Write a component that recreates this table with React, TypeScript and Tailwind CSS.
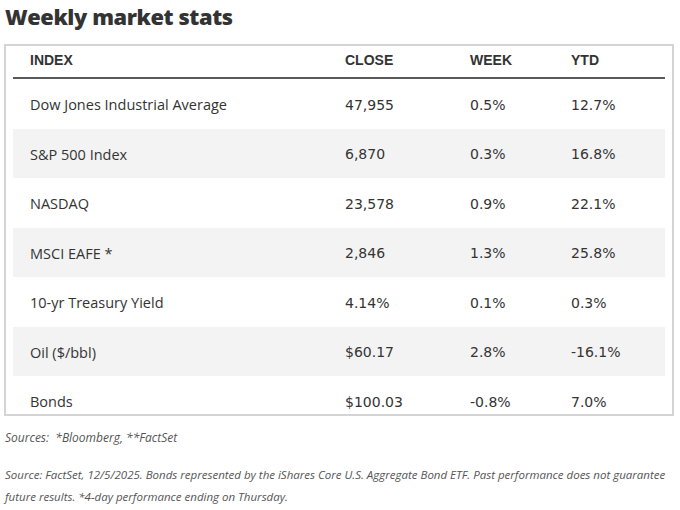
const rows = [
  { name: "Dow Jones Industrial Average", close: "47,955", week: "0.5%", ytd: "12.7%" },
  { name: "S&P 500 Index", close: "6,870", week: "0.3%", ytd: "16.8%" },
  { name: "NASDAQ", close: "23,578", week: "0.9%", ytd: "22.1%" },
  { name: "MSCI EAFE *", close: "2,846", week: "1.3%", ytd: "25.8%" },
  { name: "10-yr Treasury Yield", close: "4.14%", week: "0.1%", ytd: "0.3%" },
  { name: "Oil ($/bbl)", close: "$60.17", week: "2.8%", ytd: "-16.1%" },
  { name: "Bonds", close: "$100.03", week: "-0.8%", ytd: "7.0%" },
];

const cols = "grid grid-cols-[315px_125px_101px_1fr] items-center pl-[17px]";

export default function App() {
  return (
    <div className="h-[510px] w-[680px] overflow-hidden bg-white text-[#333]">
      <h1 className="flex h-[44px] items-start pl-[5px] pt-[1px] font-['Open_Sans',sans-serif] text-[21.8px] font-extrabold leading-[32px] tracking-[-0.4px] text-[#333]">
        Weekly market stats
      </h1>

      <div className="ml-[4px] h-[372px] w-[670px] overflow-hidden border-2 border-[#d4d4d4] px-[7px]">
        <div className={`${cols} h-[33px] border-b-2 border-[#5a5a5a] pb-[3px] font-['Liberation_Sans',sans-serif] text-[14px] font-bold`}>
          <span>INDEX</span>
          <span>CLOSE</span>
          <span>WEEK</span>
          <span>YTD</span>
        </div>
        {rows.map((r, i) => (
          <div
            key={r.name}
            className={`${cols} h-[49.5px] shrink-0 pt-[3px] ${i % 2 === 1 ? "bg-[#f3f3f3]" : "bg-white"}`}
          >
            <span className="font-['Open_Sans',sans-serif] text-[14.5px]">{r.name}</span>
            <span className="font-['DejaVu_Sans',sans-serif] text-[14px]">{r.close}</span>
            <span className="font-['DejaVu_Sans',sans-serif] text-[14px]">{r.week}</span>
            <span className="font-['DejaVu_Sans',sans-serif] text-[14px]">{r.ytd}</span>
          </div>
        ))}
      </div>

      <div className="px-[5px] font-['Open_Sans',sans-serif] text-[11.5px] italic text-[#555]">
        <p className="mt-[12px] text-[12px] leading-[20px]">Sources:&nbsp; *Bloomberg, **FactSet</p>
        <p className="mt-[16px] leading-[22px]">
          Source: FactSet, 12/5/2025. Bonds represented by the iShares Core U.S. Aggregate Bond ETF. Past performance does not guarantee future results. *4-day performance ending on Thursday.
        </p>
      </div>
    </div>
  );
}
